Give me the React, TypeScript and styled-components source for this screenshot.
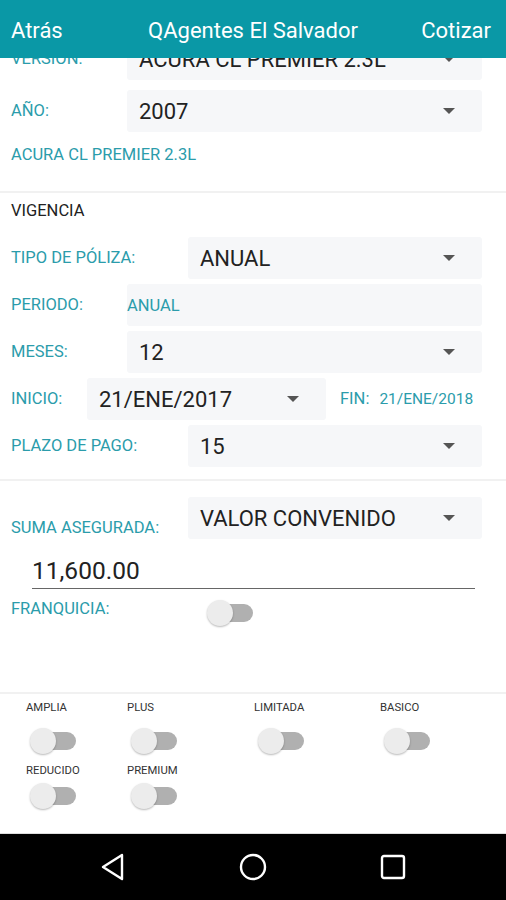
import React from "react";
import styled, { createGlobalStyle } from "styled-components";

const GlobalStyle = createGlobalStyle`
  html, body {
    margin: 0;
    padding: 0;
    background: #ffffff;
    font-family: Roboto, "Noto Sans", "Liberation Sans", sans-serif;
  }
  * {
    box-sizing: border-box;
  }
`;

const TEAL = "#0a98a6";
const LABEL = "#2b9cab";

const Screen = styled.div`
  width: 506px;
  height: 900px;
  display: flex;
  flex-direction: column;
  background: #fff;
  overflow: hidden;
`;

const AppBar = styled.header`
  height: 58px;
  flex-shrink: 0;
  display: grid;
  grid-template-columns: 1fr auto 1fr;
  align-items: center;
  padding: 2px 15px 0 11px;
  background: ${TEAL};
  color: #fff;
  font-size: 22px;
  position: relative;
  z-index: 2;
`;

const BarTitle = styled.span`
  justify-self: center;
  padding-left: 4px;
`;

const BarAction = styled.span<{ $end?: boolean }>`
  justify-self: ${({ $end }) => ($end ? "end" : "start")};
`;

const Scroller = styled.main`
  flex: 1;
  overflow: hidden;
`;

const Content = styled.div`
  margin-top: -20px;
`;

const Section = styled.section<{ $top?: number; $bottom?: number; $gap?: number }>`
  display: flex;
  flex-direction: column;
  gap: ${({ $gap }) => $gap ?? 5}px;
  padding: ${({ $top }) => $top ?? 0}px 0 ${({ $bottom }) => $bottom ?? 0}px;
`;

const Divider = styled.hr`
  margin: 0;
  border: 0;
  height: 2px;
  background: #f1f1f1;
`;

const Row = styled.div<{ $align?: string }>`
  display: flex;
  align-items: ${({ $align }) => $align ?? "center"};
  padding: 0 24px 0 11px;
`;

const Label = styled.span<{ $width?: number; $drop?: number }>`
  flex-shrink: 0;
  width: ${({ $width }) => ($width ? `${$width}px` : "auto")};
  margin-bottom: ${({ $drop }) => $drop ?? 0}px;
  color: ${LABEL};
  font-size: 16.5px;
  line-height: 18px;
`;

const Field = styled.div<{ $width?: number; $pad?: number }>`
  flex: ${({ $width }) => ($width ? "none" : "1")};
  width: ${({ $width }) => ($width ? `${$width}px` : "auto")};
  height: 42px;
  display: flex;
  align-items: center;
  justify-content: space-between;
  padding: 0 ${({ $pad }) => $pad ?? 27}px 0 12px;
  background: #f6f7f9;
  border-radius: 3px;
  color: #222;
  font-size: 22px;
`;

const TextField = styled(Field)`
  padding-left: 0;
  color: ${LABEL};
  font-size: 16.5px;
`;

const Caret = styled.span`
  width: 0;
  height: 0;
  border-left: 6px solid transparent;
  border-right: 6px solid transparent;
  border-top: 6px solid #555;
`;

const Note = styled.div<{ $dark?: boolean }>`
  padding-left: 11px;
  color: ${({ $dark }) => ($dark ? "#222" : LABEL)};
  font-size: 16.5px;
  line-height: 18px;
`;

const InlineValue = styled.span`
  margin-left: 10px;
  color: ${LABEL};
  font-size: 15.5px;
`;

const Amount = styled.div`
  margin: 18px 31px 0 32px;
  padding-bottom: 3px;
  border-bottom: 1.5px solid #666;
  color: #222;
  font-size: 24.5px;
  line-height: 28px;
`;

const Switch = styled.span`
  position: relative;
  display: inline-block;
  width: 46px;
  height: 26px;
  &::before {
    content: "";
    position: absolute;
    left: 10px;
    right: 0;
    top: 4px;
    height: 18px;
    border-radius: 9px;
    background: #b0b0b0;
  }
  &::after {
    content: "";
    position: absolute;
    left: 0;
    top: 0;
    width: 26px;
    height: 26px;
    border-radius: 50%;
    background: #ececec;
    box-shadow: 0 1px 2px rgba(0, 0, 0, 0.28);
  }
`;

const CoverGrid = styled.div`
  display: grid;
  grid-template-columns: 101px 127px 126px 1fr;
  padding: 7px 0 0 26px;
`;

const Cover = styled.div<{ $gap: number }>`
  display: flex;
  flex-direction: column;
  align-items: flex-start;
  gap: ${({ $gap }) => $gap}px;
  margin-bottom: 10px;
  ${Switch} {
    margin-left: 4px;
  }
`;

const CoverName = styled.span`
  color: #333;
  font-size: 11.3px;
  line-height: 13px;
`;

const NavBar = styled.nav`
  height: 67px;
  flex-shrink: 0;
  display: flex;
  align-items: center;
  justify-content: center;
  gap: 112px;
  background: #000;
  border-top: 1px solid #ddd;
`;

const Select: React.FC<{ value: string; pad?: number; width?: number }> = ({ value, pad, width }) => (
  <Field $pad={pad} $width={width}>
    <span>{value}</span>
    <Caret />
  </Field>
);

const BackIcon = () => (
  <svg width="28" height="28" viewBox="0 0 28 28" fill="none" stroke="#fff" strokeWidth="2.4" strokeLinejoin="round">
    <path d="M23 2 L4 14 L23 26 Z" />
  </svg>
);

const HomeIcon = () => (
  <svg width="28" height="28" viewBox="0 0 28 28" fill="none" stroke="#fff" strokeWidth="2.4">
    <circle cx="14" cy="14" r="12" />
  </svg>
);

const RecentsIcon = () => (
  <svg width="28" height="28" viewBox="0 0 28 28" fill="none" stroke="#fff" strokeWidth="2.4">
    <rect x="3" y="3" width="22" height="22" rx="2" />
  </svg>
);

const covers = [
  { name: "AMPLIA", gap: 14 },
  { name: "PLUS", gap: 14 },
  { name: "LIMITADA", gap: 14 },
  { name: "BASICO", gap: 14 },
  { name: "REDUCIDO", gap: 6 },
  { name: "PREMIUM", gap: 6 },
];

export default function App() {
  return (
    <Screen>
      <GlobalStyle />
      <AppBar>
        <BarAction>Atrás</BarAction>
        <BarTitle>QAgentes El Salvador</BarTitle>
        <BarAction $end>Cotizar</BarAction>
      </AppBar>

      <Scroller>
        <Content>
          <Section $gap={10} $bottom={27}>
            <Row>
              <Label $width={116}>VERSION:</Label>
              <Select value="ACURA CL PREMIER 2.3L" />
            </Row>
            <Row>
              <Label $width={116}>AÑO:</Label>
              <Select value="2007" />
            </Row>
            <Note style={{ marginTop: 4 }}>ACURA CL PREMIER 2.3L</Note>
          </Section>
          <Divider />

          <Section $top={9} $bottom={12}>
            <Note $dark style={{ marginBottom: 12 }}>VIGENCIA</Note>
            <Row>
              <Label $width={177}>TIPO DE PÓLIZA:</Label>
              <Select value="ANUAL" />
            </Row>
            <Row>
              <Label $width={116}>PERIODO:</Label>
              <TextField>ANUAL</TextField>
            </Row>
            <Row>
              <Label $width={116}>MESES:</Label>
              <Select value="12" />
            </Row>
            <Row>
              <Label $width={76}>INICIO:</Label>
              <Select value="21/ENE/2017" width={239} pad={27} />
              <Label style={{ marginLeft: 14 }}>FIN:</Label>
              <InlineValue>21/ENE/2018</InlineValue>
            </Row>
            <Row>
              <Label $width={177}>PLAZO DE PAGO:</Label>
              <Select value="15" />
            </Row>
          </Section>
          <Divider />

          <Section $top={16} $bottom={66} $gap={0}>
            <Row $align="flex-end">
              <Label $width={177} $drop={2}>SUMA ASEGURADA:</Label>
              <Select value="VALOR CONVENIDO" />
            </Row>
            <Amount>11,600.00</Amount>
            <Row $align="flex-start" style={{ marginTop: 11 }}>
              <Label $width={196}>FRANQUICIA:</Label>
              <Switch />
            </Row>
          </Section>
          <Divider />

          <CoverGrid>
            {covers.map((c) => (
              <Cover key={c.name} $gap={c.gap}>
                <CoverName>{c.name}</CoverName>
                <Switch />
              </Cover>
            ))}
          </CoverGrid>
        </Content>
      </Scroller>

      <NavBar>
        <BackIcon />
        <HomeIcon />
        <RecentsIcon />
      </NavBar>
    </Screen>
  );
}
